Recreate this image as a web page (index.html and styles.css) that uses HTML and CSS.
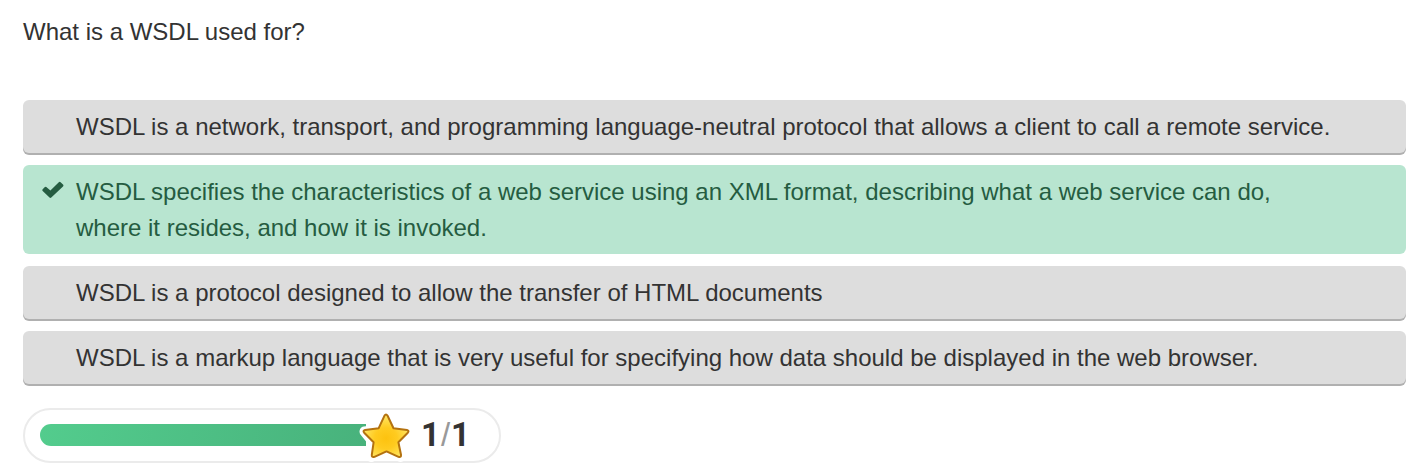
FILE: index.html
```html
<!DOCTYPE html>
<html lang="en">
<head>
<meta charset="utf-8">
<meta name="viewport" content="width=device-width, initial-scale=1">
<title>Quiz question</title>
<link rel="stylesheet" href="styles.css">
</head>
<body>
<main class="quiz">
  <h1 class="question" id="question">What is a WSDL used for?</h1>
  <div class="answers" role="radiogroup" aria-labelledby="question">
    <label class="answer">
      <span class="mark"><input class="radio" type="radio" name="answer" disabled></span>
      <span class="text">WSDL is a network, transport, and programming language-neutral protocol that allows a client to call a remote service.</span>
    </label>
    <label class="answer correct">
      <span class="mark"><input class="radio" type="radio" name="answer" checked disabled>
        <svg class="tick" viewBox="0 0 22 18" aria-hidden="true"><path d="M4.300 6L8.400 9.600L16.800 1.300Q17.700 .4 18.600 1.300L21 3.600Q21.900 4.500 21 5.400L9.300 16.600Q8.400 17.400 7.500 16.600L.7 10Q-.2 9.100 .7 8.200L2.600 6.200Q3.500 5.300 4.300 6Z"/></svg>
      </span>
      <span class="text">WSDL specifies the characteristics of a web service using an XML format, describing what a web service can do, where it resides, and how it is invoked.</span>
    </label>
    <label class="answer">
      <span class="mark"><input class="radio" type="radio" name="answer" disabled></span>
      <span class="text">WSDL is a protocol designed to allow the transfer of HTML documents</span>
    </label>
    <label class="answer">
      <span class="mark"><input class="radio" type="radio" name="answer" disabled></span>
      <span class="text">WSDL is a markup language that is very useful for specifying how data should be displayed in the web browser.</span>
    </label>
  </div>
  <div class="score">
    <div class="bar" role="progressbar" aria-label="Score" aria-valuemin="0" aria-valuemax="1" aria-valuenow="1"></div>
    <svg class="star" viewBox="0 0 54 52" aria-hidden="true">
      <defs>
        <radialGradient id="gold" cx="50%" cy="56%" r="50%">
          <stop offset="0" stop-color="#fdc20f"/><stop offset=".5" stop-color="#ffcb20"/><stop offset="1" stop-color="#ffe35c"/>
        </radialGradient>
      </defs>
      <path class="halo" d="M28 6L34.500 19.500L49.500 21.500L38.500 32L42.500 47L28 41L13 47L15 32L6.500 21.500L21.500 19.500Z"/>
      <path class="shape" d="M26.400 5.800Q28 3.300 29.600 5.800L35.500 18.200L49 20Q51.500 20.600 49.800 22.700L40.400 32.300L43 44.800Q43.300 47.800 40.500 46.800L28.500 41.400L16.500 46.800Q13.500 47.800 13.800 44.800L15.600 32.300L6.200 22.700Q4.500 20.600 7 20L20.700 18.200Z"/>
    </svg>
    <div class="points"><span>1</span><span class="slash">/</span><span>1</span></div>
  </div>
</main>
</body>
</html>
```
FILE: styles.css
```css
* { box-sizing: border-box; }
body {
  margin: 0;
  background: #fff;
  color: #333;
  font: 24px/36px "Liberation Sans", Arial, sans-serif;
}
.quiz {
  padding: 14px 0 2px 23px;
}
.question {
  margin: 0 0 50px;
  font-size: 24px;
  font-weight: 400;
}
.answers {
  display: flex;
  flex-direction: column;
  gap: 12px;
}
.answer {
  display: flex;
  padding: 9px 72px 8px 19px;
  border-radius: 6px;
  background: #ddd;
  box-shadow: 0 2px 0 #b0b0b0;
}
.correct {
  background: #b8e5d0;
  box-shadow: none;
  color: #255c41;
}
.mark {
  display: grid;
  flex: none;
  width: 34px;
  height: 36px;
  align-items: center;
}
.radio {
  grid-area: 1 / 1;
  width: 22px;
  height: 18px;
  margin: 0;
  appearance: none;
}
.tick {
  grid-area: 1 / 1;
  width: 22px;
  height: 18px;
  margin-bottom: 4px;
  fill: #255c41;
}
.score {
  display: flex;
  width: fit-content;
  height: 55px;
  margin-top: 24px;
  padding: 0 29px 0 15px;
  align-items: center;
  border: 2px solid #ebebeb;
  border-radius: 28px;
}
.bar {
  width: 326px;
  height: 22px;
  margin-bottom: 1px;
  border-radius: 11px 0 0 11px;
  background: linear-gradient(100deg, #53cc8d, #48b27c);
}
.star {
  flex: none;
  width: 54px;
  height: 52px;
  margin-left: -8px;
}
.halo {
  fill: #fff;
  stroke: #fff;
  stroke-width: 10;
  stroke-linejoin: round;
}
.shape {
  fill: url(#gold);
  stroke: #b4720f;
  stroke-width: 2;
  stroke-linejoin: round;
}
.points {
  display: flex;
  margin: 0 0 2px 9px;
  gap: 1px;
  font-family: Roboto, Arial, sans-serif;
  font-size: 33px;
  font-weight: 700;
}
.slash {
  color: #999;
  font-family: "Liberation Sans", Arial, sans-serif;
  font-weight: 400;
}
```
